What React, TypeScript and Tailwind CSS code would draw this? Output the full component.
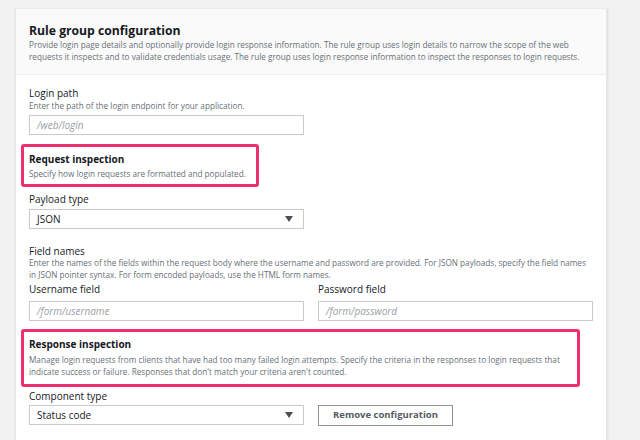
import React from "react";

const font = { fontFamily: '"Open Sans", "Liberation Sans", sans-serif' };

function Label({ children }: { children: React.ReactNode }) {
  return <div className="text-[10px] leading-[12px] text-[#16191f]">{children}</div>;
}

function Desc({ lines }: { lines: string[] }) {
  return (
    <div className="text-[8.2px] leading-[12px] text-[#687078]">
      {lines.map((l, i) => (
        <div key={i} className="whitespace-nowrap">{l}</div>
      ))}
    </div>
  );
}

function Input({ placeholder }: { placeholder: string }) {
  return (
    <div className="flex h-[20px] w-[275px] items-center border border-[#c6cccc] bg-white px-[7px] text-[10px] italic text-[#9aa0a6]">
      {placeholder}
    </div>
  );
}

function Select({ value }: { value: string }) {
  return (
    <div className="flex h-[20px] w-[275px] items-center justify-between border border-[#c6cccc] bg-white pl-[7px] pr-[10px] text-[10px] text-[#16191f]">
      <span>{value}</span>
      <svg width="8" height="6" viewBox="0 0 8 6">
        <path d="M0 0 L8 0 L4 6 Z" fill="#4a4f55" />
      </svg>
    </div>
  );
}

export default function App() {
  return (
    <div className="h-[440px] w-[640px] overflow-hidden bg-[#f2f2f2] pl-[15px] pt-[9px]" style={font}>
      <div className="h-[460px] w-[593px] border-r-[2px] border-l border-[#e4e6e6] bg-white shadow-[0_0_1px_rgba(0,0,0,0.15)]">
        <div className="h-[66px] border-b border-[#eaeded] bg-[#fafafa] px-[13px] pt-[14px]">
          <div className="text-[12.2px] font-bold leading-[16px] text-[#16191f]">Rule group configuration</div>
          <div className="mt-[0px]">
            <Desc
              lines={[
                "Provide login page details and optionally provide login response information. The rule group uses login details to narrow the scope of the web",
                "requests it inspects and to validate credentials usage. The rule group uses login response information to inspect the responses to login requests.",
              ]}
            />
          </div>
        </div>
        <div className="px-[13px] pt-[12px]">
          <Label>Login path</Label>
          <div className="mt-[1px]">
            <Desc lines={["Enter the path of the login endpoint for your application."]} />
          </div>
          <div className="mt-[3px]">
            <Input placeholder="/web/login" />
          </div>

          <div className="ml-[-8px] mt-[9px] h-[43px] w-[238px] rounded-[3px] border-[3px] border-[#f0306e] px-[5px] pt-[6px]">
            <div className="text-[10px] font-bold leading-[13px] text-[#16191f]">Request inspection</div>
            <div className="mt-[2px]">
              <Desc lines={["Specify how login requests are formatted and populated."]} />
            </div>
          </div>

          <div className="mt-[6px]">
            <Label>Payload type</Label>
          </div>
          <div className="mt-[4px]">
            <Select value="JSON" />
          </div>

          <div className="mt-[16px]">
            <Label>Field names</Label>
          </div>
          <Desc
            lines={[
              "Enter the names of the fields within the request body where the username and password are provided. For JSON payloads, specify the field names",
              "in JSON pointer syntax. For form encoded payloads, use the HTML form names.",
            ]}
          />
          <div className="mt-[2px] flex gap-[14px]">
            <div>
              <Label>Username field</Label>
              <div className="mt-[6px]">
                <Input placeholder="/form/username" />
              </div>
            </div>
            <div>
              <Label>Password field</Label>
              <div className="mt-[6px]">
                <Input placeholder="/form/password" />
              </div>
            </div>
          </div>

          <div className="ml-[-8px] mt-[8px] h-[58px] w-[559px] rounded-[3px] border-[3px] border-[#f0306e] px-[5px] pt-[6px]">
            <div className="text-[10px] font-bold leading-[13px] text-[#16191f]">Response inspection</div>
            <div className="mt-[3px]">
              <Desc
                lines={[
                  "Manage login requests from clients that have had too many failed login attempts. Specify the criteria in the responses to login requests that",
                  "indicate success or failure. Responses that don't match your criteria aren't counted.",
                ]}
              />
            </div>
          </div>

          <div className="mt-[3px]">
            <Label>Component type</Label>
          </div>
          <div className="mt-[3px] flex gap-[14px]">
            <Select value="Status code" />
            <div className="flex h-[21px] w-[135px] items-center justify-center border border-[#8d9396] bg-white text-[9.5px] font-bold text-[#545b64]">
              Remove configuration
            </div>
          </div>
        </div>
      </div>
    </div>
  );
}
